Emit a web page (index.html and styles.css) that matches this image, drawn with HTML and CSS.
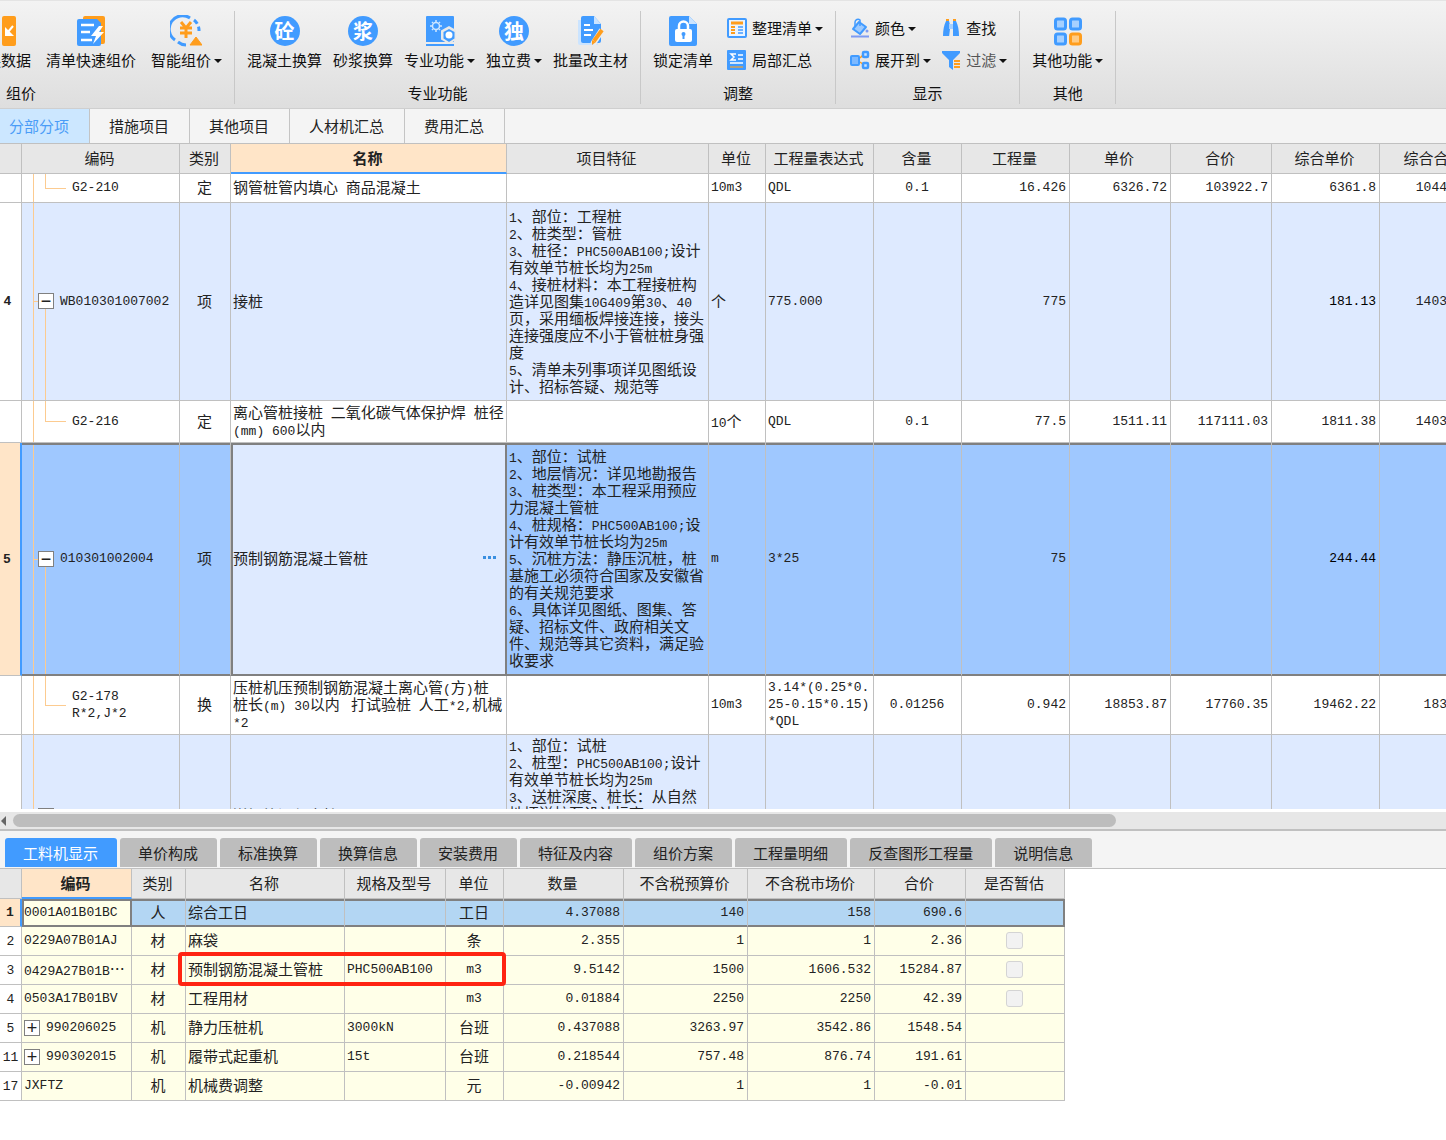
FILE: index.html
```html
<!DOCTYPE html>
<html lang="zh-CN">
<head>
<meta charset="utf-8">
<title>分部分项</title>
<link rel="stylesheet" href="styles.css">
</head>
<body>
<header class="ribbon">
  <section class="group group-first">
    <div class="tools">
      <button class="big"><svg class="ico" viewBox="0 0 32 32"><rect x="1" y="1" width="14" height="30" rx="2" fill="#419bff"/><rect x="17" y="1" width="14" height="30" rx="2" fill="#ff9d1c"/><path d="M28 11l-5 6" stroke="#fff" stroke-width="2"/><path d="M20 12v9h9z" fill="#fff"/></svg><span>替换数据</span></button>
      <button class="big"><svg class="ico" viewBox="0 0 32 32"><rect x="8" y="1" width="22" height="28" rx="2" fill="#ff9d1c"/><path d="M4 4h18l4 4v21a2 2 0 0 1-2 2H4a2 2 0 0 1-2-2V6a2 2 0 0 1 2-2z" fill="#419bff"/><path d="M6 10h13M6 17h9M6 25h11" stroke="#fff" stroke-width="2.5"/><path d="M24 11l-8 10h5l-3 8 11-12h-5l4-6z" fill="#fff"/></svg><span>清单快速组价</span></button>
      <button class="big"><svg class="ico" viewBox="0 0 32 32"><g fill="none" stroke="#419bff" stroke-width="3"><path d="M5 25A13 13 0 0 1 20 3"/><path d="M24 5a13 13 0 0 1 5 11" stroke-dasharray="5 3"/><path d="M8 27a13 13 0 0 0 8 3"/></g><path d="M11 7l5 6 5-6M10 13h12M10 18h12M16 13v10" stroke="#ff9d1c" stroke-width="3" fill="none"/><path d="M20 30l6-8 6 8z" fill="#ff9d1c" stroke="#ff9d1c" stroke-linejoin="round"/></svg><span class="drop">智能组价</span></button>
    </div>
    <h2>组价</h2>
  </section>
  <section class="group">
    <div class="tools">
      <button class="big"><b class="disc">砼</b><span>混凝土换算</span></button>
      <button class="big"><b class="disc">浆</b><span>砂浆换算</span></button>
      <button class="big"><svg class="ico" viewBox="0 0 32 32"><path d="M3 1h26a1 1 0 0 1 1 1v25H2V2a1 1 0 0 1 1-1z" fill="#419bff"/><path d="M2 30h28" stroke="#419bff" stroke-width="2"/><circle cx="12" cy="11" r="3.500" fill="none" stroke="#cfe6ff" stroke-width="1.500"/><path d="M12 5v2M12 15v2M6 11h2M16 11h2M8 7l1 1M15 14l1 1M8 15l1-1M15 8l1-1" stroke="#cfe6ff" stroke-width="1.500"/><path d="M25 11l8 4.500v9L25 29l-8-4.500v-9z" fill="#e9e9e9"/><path d="M25 14l5.500 3v6.500L25 27l-5.500-3.500V17z" fill="#419bff"/><circle cx="25" cy="20" r="3.500" fill="#fff"/></svg><span class="drop">专业功能</span></button>
      <button class="big"><b class="disc">独</b><span class="drop">独立费</span></button>
      <button class="big"><svg class="ico" viewBox="0 0 32 32"><path d="M3 5h20v25H5a2 2 0 0 1-2-2z" fill="#cbe4ff"/><path d="M8 1h11l7 8v17a2 2 0 0 1-2 2H8a2 2 0 0 1-2-2V3a2 2 0 0 1 2-2z" fill="#419bff"/><path d="M19 1l7 8h-7z" fill="#cbe4ff"/><path d="M9 10h6M9 15h9M9 20h7" stroke="#fff" stroke-width="2"/><path d="M27 15l-9 14" stroke="#ededed" stroke-width="6"/><path d="M27 15l-8 11" stroke="#ff9d1c" stroke-width="4"/><path d="M17 25l4 2-4 3z" fill="#ff9d1c"/></svg><span>批量改主材</span></button>
    </div>
    <h2>专业功能</h2>
  </section>
  <section class="group">
    <div class="tools">
      <button class="big"><svg class="ico" viewBox="0 0 32 32"><path d="M4 1h18l8 8v20a2 2 0 0 1-2 2H4a2 2 0 0 1-2-2V3a2 2 0 0 1 2-2z" fill="#419bff"/><path d="M22 1l8 8h-8z" fill="#cbe4ff"/><rect x="8" y="14" width="17" height="13" rx="2" fill="#fff"/><path d="M12 15v-4a4.500 4.500 0 0 1 9 0v4" fill="none" stroke="#fff" stroke-width="2.500"/><circle cx="16.500" cy="19" r="2" fill="#419bff"/><path d="M16.500 19v5" stroke="#419bff" stroke-width="2"/></svg><span>锁定清单</span></button>
      <div class="stack">
        <button class="small"><svg class="sico" viewBox="0 0 20 20"><rect x="1" y="1" width="18" height="18" rx="1" fill="#eaf4ff" stroke="#419bff" stroke-width="2"/><path d="M4 5h12" stroke="#ff9d1c" stroke-width="3"/><path d="M4 9h4M4 12h4M4 15h4" stroke="#ff9d1c" stroke-width="2"/><path d="M11 9h5M11 12h5M11 15h5" stroke="#6fb2ff" stroke-width="2"/></svg><span class="drop">整理清单</span></button>
        <button class="small"><svg class="sico" viewBox="0 0 20 20"><rect width="19" height="20" rx="1" fill="#419bff"/><path d="M9 4H4l3 3-3 3h5M11 5h5M11 9h5M3 13h13" stroke="#fff" fill="none" stroke-width="1.500"/><path d="M3 17h13" stroke="#b0a080" stroke-width="2"/></svg><span>局部汇总</span></button>
      </div>
    </div>
    <h2>调整</h2>
  </section>
  <section class="group">
    <div class="tools tools-wide">
      <div class="stack">
        <button class="small"><svg class="sico" viewBox="0 0 20 20"><path d="M9 4l7 5-6 7-7-5z" fill="#9ccaff" stroke="#419bff" stroke-width="2" stroke-linejoin="round"/><path d="M5 8V4a3 3 0 0 1 5-2v6" stroke="#419bff" stroke-width="1.500" fill="none"/><circle cx="17" cy="13" r="1.500" fill="#7d9bf2"/><path d="M1 18.500h18" stroke="#7d9bf2" stroke-width="2"/></svg><span class="drop">颜色</span></button>
        <button class="small"><svg class="sico" viewBox="0 0 20 20"><path d="M10 8l4-4M10 12l4 3" stroke="#ff9d1c" stroke-width="1.500"/><rect x="1" y="6" width="8" height="9" rx="1" fill="#7db9ff" stroke="#419bff" stroke-width="2"/><rect x="13" y="2" width="5" height="5" rx="1" fill="#cbe4ff" stroke="#419bff" stroke-width="2.500"/><rect x="13" y="13" width="5" height="5" rx="1" fill="#cbe4ff" stroke="#419bff" stroke-width="2.500"/></svg><span class="drop">展开到</span></button>
      </div>
      <div class="stack">
        <button class="small"><svg class="sico" viewBox="0 0 20 20"><path d="M5 3h3l1 4v11H2c0-6 1-11 3-15zM12 3h3c2 4 3 9 3 15h-6V7z" fill="#419bff"/><path d="M8 6h4v5H8z" fill="#a6d0ff"/><path d="M5 2h3M12 2h3" stroke="#ff9d1c" stroke-width="2"/><path d="M9 11h3v8H8z" fill="#ececec"/></svg><span>查找</span></button>
        <button class="small muted"><svg class="sico" viewBox="0 0 20 20"><path d="M1 1h18v2l-7 7v10l-4-3v-7L1 3z" fill="#419bff"/><path d="M13 11h6M13 14h6M13 17h6" stroke="#ff9d1c" stroke-width="2"/></svg><span class="drop">过滤</span></button>
      </div>
    </div>
    <h2>显示</h2>
  </section>
  <section class="group">
    <div class="tools">
      <button class="big"><svg class="ico" viewBox="0 0 32 32"><g stroke-width="3" fill="#a6d0ff" stroke="#419bff"><rect x="3.500" y="4" width="10" height="10" rx="2"/><rect x="18.500" y="4" width="10" height="10" rx="2"/><rect x="3.500" y="19" width="10" height="10" rx="2"/><rect x="18.500" y="19" width="10" height="10" rx="2" fill="#ffcb84" stroke="#ff9d1c"/></g></svg><span class="drop">其他功能</span></button>
    </div>
    <h2>其他</h2>
  </section>
</header>

<nav class="tabs">
  <button class="active">分部分项</button><button>措施项目</button><button>其他项目</button><button>人材机汇总</button><button>费用汇总</button>
</nav>

<main class="bill">
  <table class="grid bill-grid">
    <colgroup><col class="w22"><col class="w158"><col class="w51"><col class="w276"><col class="w202"><col class="w57"><col class="w108"><col class="w88"><col class="w108"><col class="w101"><col class="w101"><col class="w108"><col class="w110"></colgroup>
    <thead>
      <tr><th></th><th>编码</th><th>类别</th><th class="current">名称</th><th>项目特征</th><th>单位</th><th>工程量表达式</th><th>含量</th><th>工程量</th><th>单价</th><th>合价</th><th>综合单价</th><th>综合合价</th></tr>
    </thead>
    <tbody>
      <tr class="h29"><td></td><td class="leaf a">G2-210</td><td class="c">定</td><td>钢管桩管内填心<span class="a"> </span>商品混凝土</td><td></td><td class="a">10m3</td><td class="a">QDL</td><td class="a c">0.1</td><td class="n">16.426</td><td class="n">6326.72</td><td class="n">103922.7</td><td class="n">6361.8</td><td class="n">104498.93</td></tr>
      <tr class="item h198"><td class="no">4</td><td class="parent a"><button class="toggle" aria-label="折叠">−</button>WB010301007002</td><td class="c">项</td><td>接桩</td>
        <td><span class="a">1</span>、部位：工程桩<br><span class="a">2</span>、桩类型：管桩<br><span class="a">3</span>、桩径：<span class="a">PHC500AB100;</span>设计<br>有效单节桩长均为<span class="a">25m</span><br><span class="a">4</span>、接桩材料：本工程接桩构<br>造详见图集<span class="a">10G409</span>第<span class="a">30</span>、<span class="a">40</span><br>页，采用缅板焊接连接，接头<br>连接强度应不小于管桩桩身强<br>度<br><span class="a">5</span>、清单未列事项详见图纸设<br>计、招标答疑、规范等</td>
        <td>个</td><td class="a">775.000</td><td></td><td class="n">775</td><td></td><td></td><td class="n dark">181.13</td><td class="n">140375.75</td></tr>
      <tr class="h42"><td></td><td class="leaf a">G2-216</td><td class="c">定</td><td>离心管桩接桩<span class="a"> </span>二氧化碳气体保护焊<span class="a"> </span>桩径<br><span class="a">(mm) 600</span>以内</td><td></td><td><span class="a">10</span>个</td><td class="a">QDL</td><td class="a c">0.1</td><td class="n">77.5</td><td class="n">1511.11</td><td class="n">117111.03</td><td class="n">1811.38</td><td class="n">140381.95</td></tr>
      <tr class="item selected h233"><td class="no">5</td><td class="parent a"><button class="toggle" aria-label="折叠">−</button>010301002004</td><td class="c">项</td><td class="edit"><div class="editor"><span>预制钢筋混凝土管桩</span><button class="more" aria-label="更多"><svg width="14" height="4" viewBox="0 0 14 4"><path d="M0 0h3v3H0zM5 0h3v3H5zM10 0h3v3h-3z" fill="#3a8fe0"/></svg></button></div></td>
        <td><span class="a">1</span>、部位：试桩<br><span class="a">2</span>、地层情况：详见地勘报告<br><span class="a">3</span>、桩类型：本工程采用预应<br>力混凝土管桩<br><span class="a">4</span>、桩规格：<span class="a">PHC500AB100;</span>设<br>计有效单节桩长均为<span class="a">25m</span><br><span class="a">5</span>、沉桩方法：静压沉桩，桩<br>基施工必须符合国家及安徽省<br>的有关规范要求<br><span class="a">6</span>、具体详见图纸、图集、答<br>疑、招标文件、政府相关文<br>件、规范等其它资料，满足验<br>收要求</td>
        <td class="a">m</td><td class="a">3*25</td><td></td><td class="n">75</td><td></td><td></td><td class="n dark">244.44</td><td></td></tr>
      <tr class="h59"><td></td><td class="leaf a">G2-178<br>R*2,J*2</td><td class="c">换</td><td>压桩机压预制钢筋混凝土离心管<span class="a">(</span>方<span class="a">)</span>桩<br>桩长<span class="a">(m) 30</span>以内<span class="a"> </span> 打试验桩<span class="a"> </span>人工<span class="a">*2,</span>机械<br><span class="a">*2</span></td><td></td><td class="a">10m3</td><td class="a">3.14*(0.25*0.<br>25-0.15*0.15)<br>*QDL</td><td class="a c">0.01256</td><td class="n">0.942</td><td class="n">18853.87</td><td class="n">17760.35</td><td class="n">19462.22</td><td class="n">18333.41</td></tr>
      <tr class="item h163"><td></td><td class="parent a"><button class="toggle" aria-label="折叠">−</button>010301002005</td><td class="c">项</td><td>送钢筋混凝土桩</td>
        <td class="top"><span class="a">1</span>、部位：试桩<br><span class="a">2</span>、桩型：<span class="a">PHC500AB100;</span>设计<br>有效单节桩长均为<span class="a">25m</span><br><span class="a">3</span>、送桩深度、桩长：从自然<br>地坪送桩至设计标高</td>
        <td></td><td></td><td></td><td></td><td></td><td></td><td></td><td></td></tr>
    </tbody>
  </table>
</main>
<div class="scroll"><svg width="7" height="12" viewBox="0 0 7 12"><path d="M6 1v10L1 6z" fill="#666"/></svg><div class="track"><div class="thumb"></div></div></div>

<section class="detail">
  <nav class="dtabs">
    <button class="active">工料机显示</button><button>单价构成</button><button>标准换算</button><button>换算信息</button><button>安装费用</button><button>特征及内容</button><button>组价方案</button><button>工程量明细</button><button>反查图形工程量</button><button>说明信息</button>
  </nav>
  <table class="grid res-grid">
    <colgroup><col class="w22"><col class="w110"><col class="w54"><col class="w159"><col class="w101"><col class="w58"><col class="w120"><col class="w124"><col class="w127"><col class="w91"><col class="w99"></colgroup>
    <thead><tr><th></th><th class="current">编码</th><th>类别</th><th>名称</th><th>规格及型号</th><th>单位</th><th>数量</th><th>不含税预算价</th><th>不含税市场价</th><th>合价</th><th>是否暂估</th></tr></thead>
    <tbody>
      <tr class="selected"><td class="no">1</td><td class="edit a">0001A01B01BC</td><td class="c">人</td><td>综合工日</td><td></td><td class="c">工日</td><td class="n">4.37088</td><td class="n">140</td><td class="n">158</td><td class="n">690.6</td><td></td></tr>
      <tr><td class="no">2</td><td class="a">0229A07B01AJ</td><td class="c">材</td><td>麻袋</td><td></td><td class="c">条</td><td class="n">2.355</td><td class="n">1</td><td class="n">1</td><td class="n">2.36</td><td class="c"><input type="checkbox" disabled aria-label="是否暂估"></td></tr>
      <tr><td class="no">3</td><td><span class="a">0429A27B01B</span>…</td><td class="c">材</td><td class="marked">预制钢筋混凝土管桩<i class="mark"></i></td><td class="a">PHC500AB100</td><td class="a c">m3</td><td class="n">9.5142</td><td class="n">1500</td><td class="n">1606.532</td><td class="n">15284.87</td><td class="c"><input type="checkbox" disabled aria-label="是否暂估"></td></tr>
      <tr><td class="no">4</td><td class="a">0503A17B01BV</td><td class="c">材</td><td>工程用材</td><td></td><td class="a c">m3</td><td class="n">0.01884</td><td class="n">2250</td><td class="n">2250</td><td class="n">42.39</td><td class="c"><input type="checkbox" disabled aria-label="是否暂估"></td></tr>
      <tr><td class="no">5</td><td class="a"><button class="toggle" aria-label="展开">+</button>990206025</td><td class="c">机</td><td>静力压桩机</td><td class="a">3000kN</td><td class="c">台班</td><td class="n">0.437088</td><td class="n">3263.97</td><td class="n">3542.86</td><td class="n">1548.54</td><td></td></tr>
      <tr><td class="no">11</td><td class="a"><button class="toggle" aria-label="展开">+</button>990302015</td><td class="c">机</td><td>履带式起重机</td><td class="a">15t</td><td class="c">台班</td><td class="n">0.218544</td><td class="n">757.48</td><td class="n">876.74</td><td class="n">191.61</td><td></td></tr>
      <tr><td class="no">17</td><td class="a">JXFTZ</td><td class="c">机</td><td>机械费调整</td><td></td><td class="c">元</td><td class="n">-0.00942</td><td class="n">1</td><td class="n">1</td><td class="n">-0.01</td><td></td></tr>
    </tbody>
  </table>
</section>
</body>
</html>
```
FILE: styles.css
```css
* { box-sizing: border-box; }

body {
  margin: 0;
  height: 100vh;
  display: flex;
  flex-direction: column;
  overflow: hidden;
  background: #fff;
  color: #222;
  font: 15px/17px "Noto Sans CJK SC", sans-serif;
}

button {
  margin: 0;
  padding: 0;
  border: 0;
  background: none;
  color: inherit;
  font: inherit;
  white-space: nowrap;
}

/* ribbon */
.ribbon {
  flex: none;
  display: flex;
  height: 109px;
  margin-left: -192px;
  padding: 10px 0 4px;
  border-top: 1px solid #e4e4e4;
  border-bottom: 1px solid #cfcfcf;
  background: linear-gradient(#f3f3f3, #dedede);
  color: #111;
}
.group {
  flex: none;
  display: flex;
  flex-direction: column;
  justify-content: space-between;
  padding: 4px 12px 1px;
  border-right: 1px solid #c8c8c8;
}
.group-first { width: 427px; }
.group-first .tools { justify-content: flex-end; gap: 15px; }
.group h2 {
  margin: 0;
  font-size: 15px;
  font-weight: 400;
  line-height: 20px;
  text-align: center;
}
.tools { display: flex; gap: 11px; }
.big {
  display: flex;
  flex-direction: column;
  align-items: center;
  gap: 3px;
  line-height: 20px;
}
.ico { display: block; width: 32px; height: 32px; }
.disc {
  width: 30px;
  height: 30px;
  margin: 1px 0;
  border-radius: 50%;
  background: #419bff;
  color: #fff;
  font-size: 20px;
  line-height: 29px;
  text-align: center;
}
.drop::after {
  content: "";
  display: inline-block;
  margin-left: 3px;
  border: 4px solid transparent;
  border-top-color: #111;
  border-bottom: 0;
  vertical-align: 3px;
}
.stack { display: flex; flex-direction: column; gap: 12px; padding: 3px 0 0 3px; }
.tools-wide { gap: 8px; }
.tools-wide .stack { padding-left: 2px; }
.small { display: flex; align-items: center; gap: 5px; line-height: 20px; }
.sico { width: 20px; height: 20px; }
.muted { color: #555; }

/* page tabs */
.tabs {
  flex: none;
  display: flex;
  height: 34px;
  background: #f4f4f4;
}
.tabs button {
  padding: 0 20px 1px 19px;
  border-right: 1px solid #c4c4c4;
  box-sizing: content-box;
}
.tabs .active {
  margin-left: -10px;
  background: #cce7ff;
  color: #4a9cf7;
}

/* data grids */
.grid {
  border-collapse: separate;
  border-spacing: 0;
  table-layout: fixed;
  width: 1px;
}
.grid th, .grid td {
  overflow: hidden;
  padding: 0 3px 3px 2px;
  border-right: 1px solid #c0c0c0;
  border-bottom: 1px solid #c0c0c0;
  text-align: left;
  white-space: nowrap;
}
.grid th {
  padding: 0 2px 2px 0;
  background: #e7e7e7;
  font-weight: 400;
  text-align: center;
}
.grid .current {
  border-bottom: 2px solid #419bff;
  background: #ffe5c8;
  font-weight: 700;
}
.a, .grid .n, .no { font-family: "Liberation Mono", "Noto Sans CJK SC", monospace; font-size: 13px; }
.grid .a, .grid .n { padding-bottom: 1px; }
.grid span.a { padding: 0; line-height: 8px; white-space: pre; }
.grid .n { text-align: right; }
.grid .c { text-align: center; }
.grid .dark { color: #000; }
.grid .no { padding: 0; text-align: center; }
.grid .top { padding-top: 1px; vertical-align: top; }

.w22 { width: 22px; }
.w51 { width: 51px; }
.w54 { width: 54px; }
.w57 { width: 57px; }
.w58 { width: 58px; }
.w88 { width: 88px; }
.w91 { width: 91px; }
.w99 { width: 99px; }
.w101 { width: 101px; }
.w108 { width: 108px; }
.w110 { width: 110px; }
.w120 { width: 120px; }
.w124 { width: 124px; }
.w127 { width: 127px; }
.w158 { width: 158px; }
.w159 { width: 159px; }
.w202 { width: 202px; }
.w276 { width: 276px; }

.bill { flex: 1; min-height: 0; overflow: hidden; border-top: 1px solid #c0c0c0; }
.bill-grid th { height: 30px; }
.h29 { height: 29px; }
.h42 { height: 42px; }
.h59 { height: 59px; }
.h163 { height: 163px; }
.h198 { height: 198px; }
.h233 { height: 233px; }
.bill-grid .no { padding-right: 6px; font-weight: 700; }

.item td { background-color: #deeaff; }
.item td:first-child { background-color: #fff; }
.bill-grid .selected td { background-color: #9fc8ff; }
.grid .selected td { box-shadow: inset 0 2px #808080, inset 0 -1px #808080; border-bottom-color: #808080; }
.grid .selected td:first-child {
  border-right: 2px solid #419bff;
  border-bottom-color: #c0c0c0;
  background-color: #ffe5c8;
  box-shadow: none;
  font-weight: 700;
}
.grid .selected .edit {
  border-right: 2px solid #808080;
  box-shadow: inset 2px 0 #808080, inset 0 2px #808080, inset 0 -1px #808080;
}
.bill-grid .selected .edit { background-color: #deeaff; }
.editor { display: flex; align-items: center; justify-content: space-between; padding-right: 5px; }
.more { display: flex; }

/* tree guides */
.grid .leaf {
  padding-left: 50px;
  background: linear-gradient(#fccb90, #fccb90) 11px 0 / 1px 100% no-repeat,
    linear-gradient(#fccb90, #fccb90) 23px 0 / 1px 50% no-repeat,
    linear-gradient(#fccb90, #fccb90) 23px 50% / 21px 1px no-repeat;
}
.grid .parent {
  padding-left: 16px;
  background-image: linear-gradient(#fccb90, #fccb90), linear-gradient(#fccb90, #fccb90), linear-gradient(#fccb90, #fccb90);
  background-position: 11px 0, 23px 100%, 11px 50%;
  background-size: 1px 100%, 1px 50%, 5px 1px;
  background-repeat: no-repeat;
}
.toggle {
  width: 16px;
  height: 16px;
  margin-right: 6px;
  border: 1px solid #808080;
  background: #fff;
  font: 18px/12px "Liberation Sans", sans-serif;
  vertical-align: middle;
}

/* horizontal scroll bar */
.scroll {
  flex: none;
  display: flex;
  align-items: center;
  gap: 6px;
  height: 22px;
  border-top: 3px solid #fff;
  border-bottom: 2px solid #c0c0c0;
  background: #e7e7e7;
}
.track { flex: 1; }
.thumb { width: 77%; height: 13px; border-radius: 7px; background: #bdbdbd; }

/* resource detail panel */
.detail { flex: 0 0 309px; }
.dtabs {
  display: flex;
  gap: 3px;
  height: 38px;
  padding: 7px 5px 1px;
  border-bottom: 1px solid #c0c0c0;
  background: #f4f4f4;
}
.dtabs button {
  padding: 0 19px 1px 18px;
  border-radius: 3px 3px 0 0;
  background: #bdbdbd;
}
.dtabs .active { background: #419bff; color: #fff; }
.res-grid th { height: 30px; }
.res-grid tbody tr { height: 29px; }
.res-grid tbody .selected { height: 28px; }
.res-grid td { background: #ffffe8; }
.res-grid td:first-child { background: #fff; }
.res-grid .selected td { background-color: #b3d6f3; }
.res-grid .selected .edit { background-color: #ffffe8; }
.res-grid .selected td:last-child { border-right: 2px solid #808080; }
.res-grid .marked { position: relative; overflow: visible; }
.mark {
  position: absolute;
  z-index: 1;
  left: -8px;
  top: -4px;
  width: 328px;
  height: 34px;
  border: 4px solid #ff2412;
  border-radius: 4px;
}
input[type="checkbox"] {
  appearance: none;
  display: block;
  width: 17px;
  height: 17px;
  margin: 2px auto 0;
  border: 1px solid #d4d4d4;
  border-radius: 3px;
  background: #f2f2f2;
}
```
